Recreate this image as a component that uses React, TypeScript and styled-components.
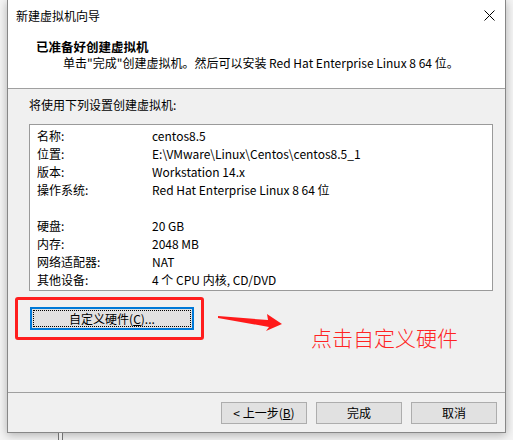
import React from 'react';
import styled, { createGlobalStyle } from 'styled-components';

const Global = createGlobalStyle`
  html, body { margin: 0; padding: 0; background: #f4f4f4; }
  body {
    font-family: "Noto Sans CJK SC", "Noto Sans", sans-serif;
    font-size: 12px;
    color: #000;
  }
  #root { width: 513px; height: 440px; overflow: hidden; }
`;

const Page = styled.div`
  width: 513px;
  height: 440px;
  overflow: hidden;
  padding-left: 7px;
  box-sizing: border-box;
  display: flex;
  flex-direction: column;
`;

const Dialog = styled.div`
  width: 499px;
  height: 433px;
  flex: none;
  box-sizing: border-box;
  border: 1px solid #878787;
  border-top: none;
  background: #f0f0f0;
  box-shadow: 0 2px 9px rgba(0, 0, 0, 0.28);
  display: flex;
  flex-direction: column;
`;

const Header = styled.div`
  background: #fff;
  height: 89px;
  flex: none;
  box-sizing: border-box;
  border-bottom: 1px solid #a0a0a0;
  display: flex;
  flex-direction: column;
`;

const TitleBar = styled.div`
  height: 32px;
  display: flex;
  align-items: center;
  justify-content: space-between;
  padding: 0 10px 0 8px;
  line-height: 16px;
`;

const CloseIcon = styled.svg`
  width: 11px;
  height: 11px;
  margin-bottom: 2px;
`;

const Heading = styled.div`
  margin-top: 7px;
  padding-left: 28px;
  font-weight: bold;
  font-size: 12.5px;
  line-height: 16px;
`;

const SubHeading = styled.div`
  padding-left: 55px;
  line-height: 16px;
  white-space: nowrap;
`;

const Body = styled.div`
  flex: 1;
  display: flex;
  flex-direction: column;
  padding-top: 8px;
`;

const Prompt = styled.div`
  margin-left: 21px;
  line-height: 16px;
`;

const ListBox = styled.div`
  margin: 11px 0 0 21px;
  width: 464px;
  height: 167px;
  box-sizing: border-box;
  border: 1px solid #9a9a9a;
  background: #fff;
  padding-top: 2px;
  display: grid;
  grid-template-columns: 122px 1fr;
  grid-auto-rows: 18px;
  align-content: start;
`;

const Cell = styled.div<{ $first?: boolean }>`
  line-height: 18px;
  white-space: nowrap;
  padding-left: ${(p) => (p.$first ? '7px' : '0')};
`;

const AnnotationRow = styled.div`
  margin: 6px 0 0 7px;
  display: flex;
  align-items: flex-start;
`;

const RedBox = styled.div`
  width: 189px;
  height: 43px;
  box-sizing: border-box;
  border: 3px solid #ff1e1e;
  border-radius: 3px;
  display: flex;
  align-items: center;
  padding-left: 12px;
`;

const Button = styled.div<{ $w: number; $focus?: boolean }>`
  position: relative;
  width: ${(p) => p.$w}px;
  height: ${(p) => (p.$focus ? 23 : 22)}px;
  box-sizing: border-box;
  background: #e1e1e1;
  border: 1px solid ${(p) => (p.$focus ? '#0078d7' : '#adadad')};
  box-shadow: ${(p) => (p.$focus ? 'inset 0 0 0 1px #0078d7' : 'none')};
  display: flex;
  align-items: center;
  justify-content: center;
  line-height: 16px;
  ${(p) =>
    p.$focus
      ? `&::after {
      content: '';
      position: absolute;
      inset: 2px;
      border: 1px dotted #000;
    }`
      : ''}
`;

const U = styled.span`
  text-decoration: underline;
`;

const Arrow = styled.svg`
  margin: 16px 0 0 14px;
  width: 66px;
  height: 20px;
  flex: none;
`;

const Note = styled.div`
  margin: 28px 0 0 27px;
  color: #ff2424;
  font-size: 21px;
  font-weight: 300;
  line-height: 24px;
  white-space: nowrap;
`;

const Footer = styled.div`
  height: 40px;
  flex: none;
  box-sizing: border-box;
  border-top: 1px solid #a0a0a0;
  padding: 9px 8px 0 0;
  display: flex;
  justify-content: flex-end;
  align-items: flex-start;
  gap: 9px;
`;

const BehindPost = styled.div`
  margin-left: 51px;
  width: 5px;
  height: 10px;
  box-sizing: border-box;
  border-left: 1px solid #707070;
  border-right: 1px solid #707070;
  background: #e6e6e6;
`;

const rows: [string, string][] = [
  ['名称:', 'centos8.5'],
  ['位置:', 'E:\\VMware\\Linux\\Centos\\centos8.5_1'],
  ['版本:', 'Workstation 14.x'],
  ['操作系统:', 'Red Hat Enterprise Linux 8 64 位'],
  ['', ''],
  ['硬盘:', '20 GB'],
  ['内存:', '2048 MB'],
  ['网络适配器:', 'NAT'],
  ['其他设备:', '4 个 CPU 内核, CD/DVD'],
];

export default function App() {
  return (
    <>
      <Global />
      <Page>
        <Dialog>
          <Header>
            <TitleBar>
              <span>新建虚拟机向导</span>
              <CloseIcon viewBox="0 0 11 11">
                <path d="M0.5 0.5 L10.5 10.5 M10.5 0.5 L0.5 10.5" stroke="#000" strokeWidth="1" fill="none" />
              </CloseIcon>
            </TitleBar>
            <Heading>已准备好创建虚拟机</Heading>
            <SubHeading>单击"完成"创建虚拟机。然后可以安装 Red Hat Enterprise Linux 8 64 位。</SubHeading>
          </Header>
          <Body>
            <Prompt>将使用下列设置创建虚拟机:</Prompt>
            <ListBox>
              {rows.map(([k, v], i) => (
                <React.Fragment key={i}>
                  <Cell $first>{k}</Cell>
                  <Cell>{v}</Cell>
                </React.Fragment>
              ))}
            </ListBox>
            <AnnotationRow>
              <RedBox>
                <Button $w={164} $focus>
                  <span>
                    自定义硬件(<U>C</U>)...
                  </span>
                </Button>
              </RedBox>
              <Arrow viewBox="0 0 66 20">
                <polygon points="0,3 50,7 49,1 64,11 48,18 51,14 0,5" fill="#ff1a1a" />
              </Arrow>
              <Note>点击自定义硬件</Note>
            </AnnotationRow>
          </Body>
          <Footer>
            <Button $w={86}>
              <span>
                &lt; 上一步(<U>B</U>)
              </span>
            </Button>
            <Button $w={86}>完成</Button>
            <Button $w={86}>取消</Button>
          </Footer>
        </Dialog>
        <BehindPost />
      </Page>
    </>
  );
}
